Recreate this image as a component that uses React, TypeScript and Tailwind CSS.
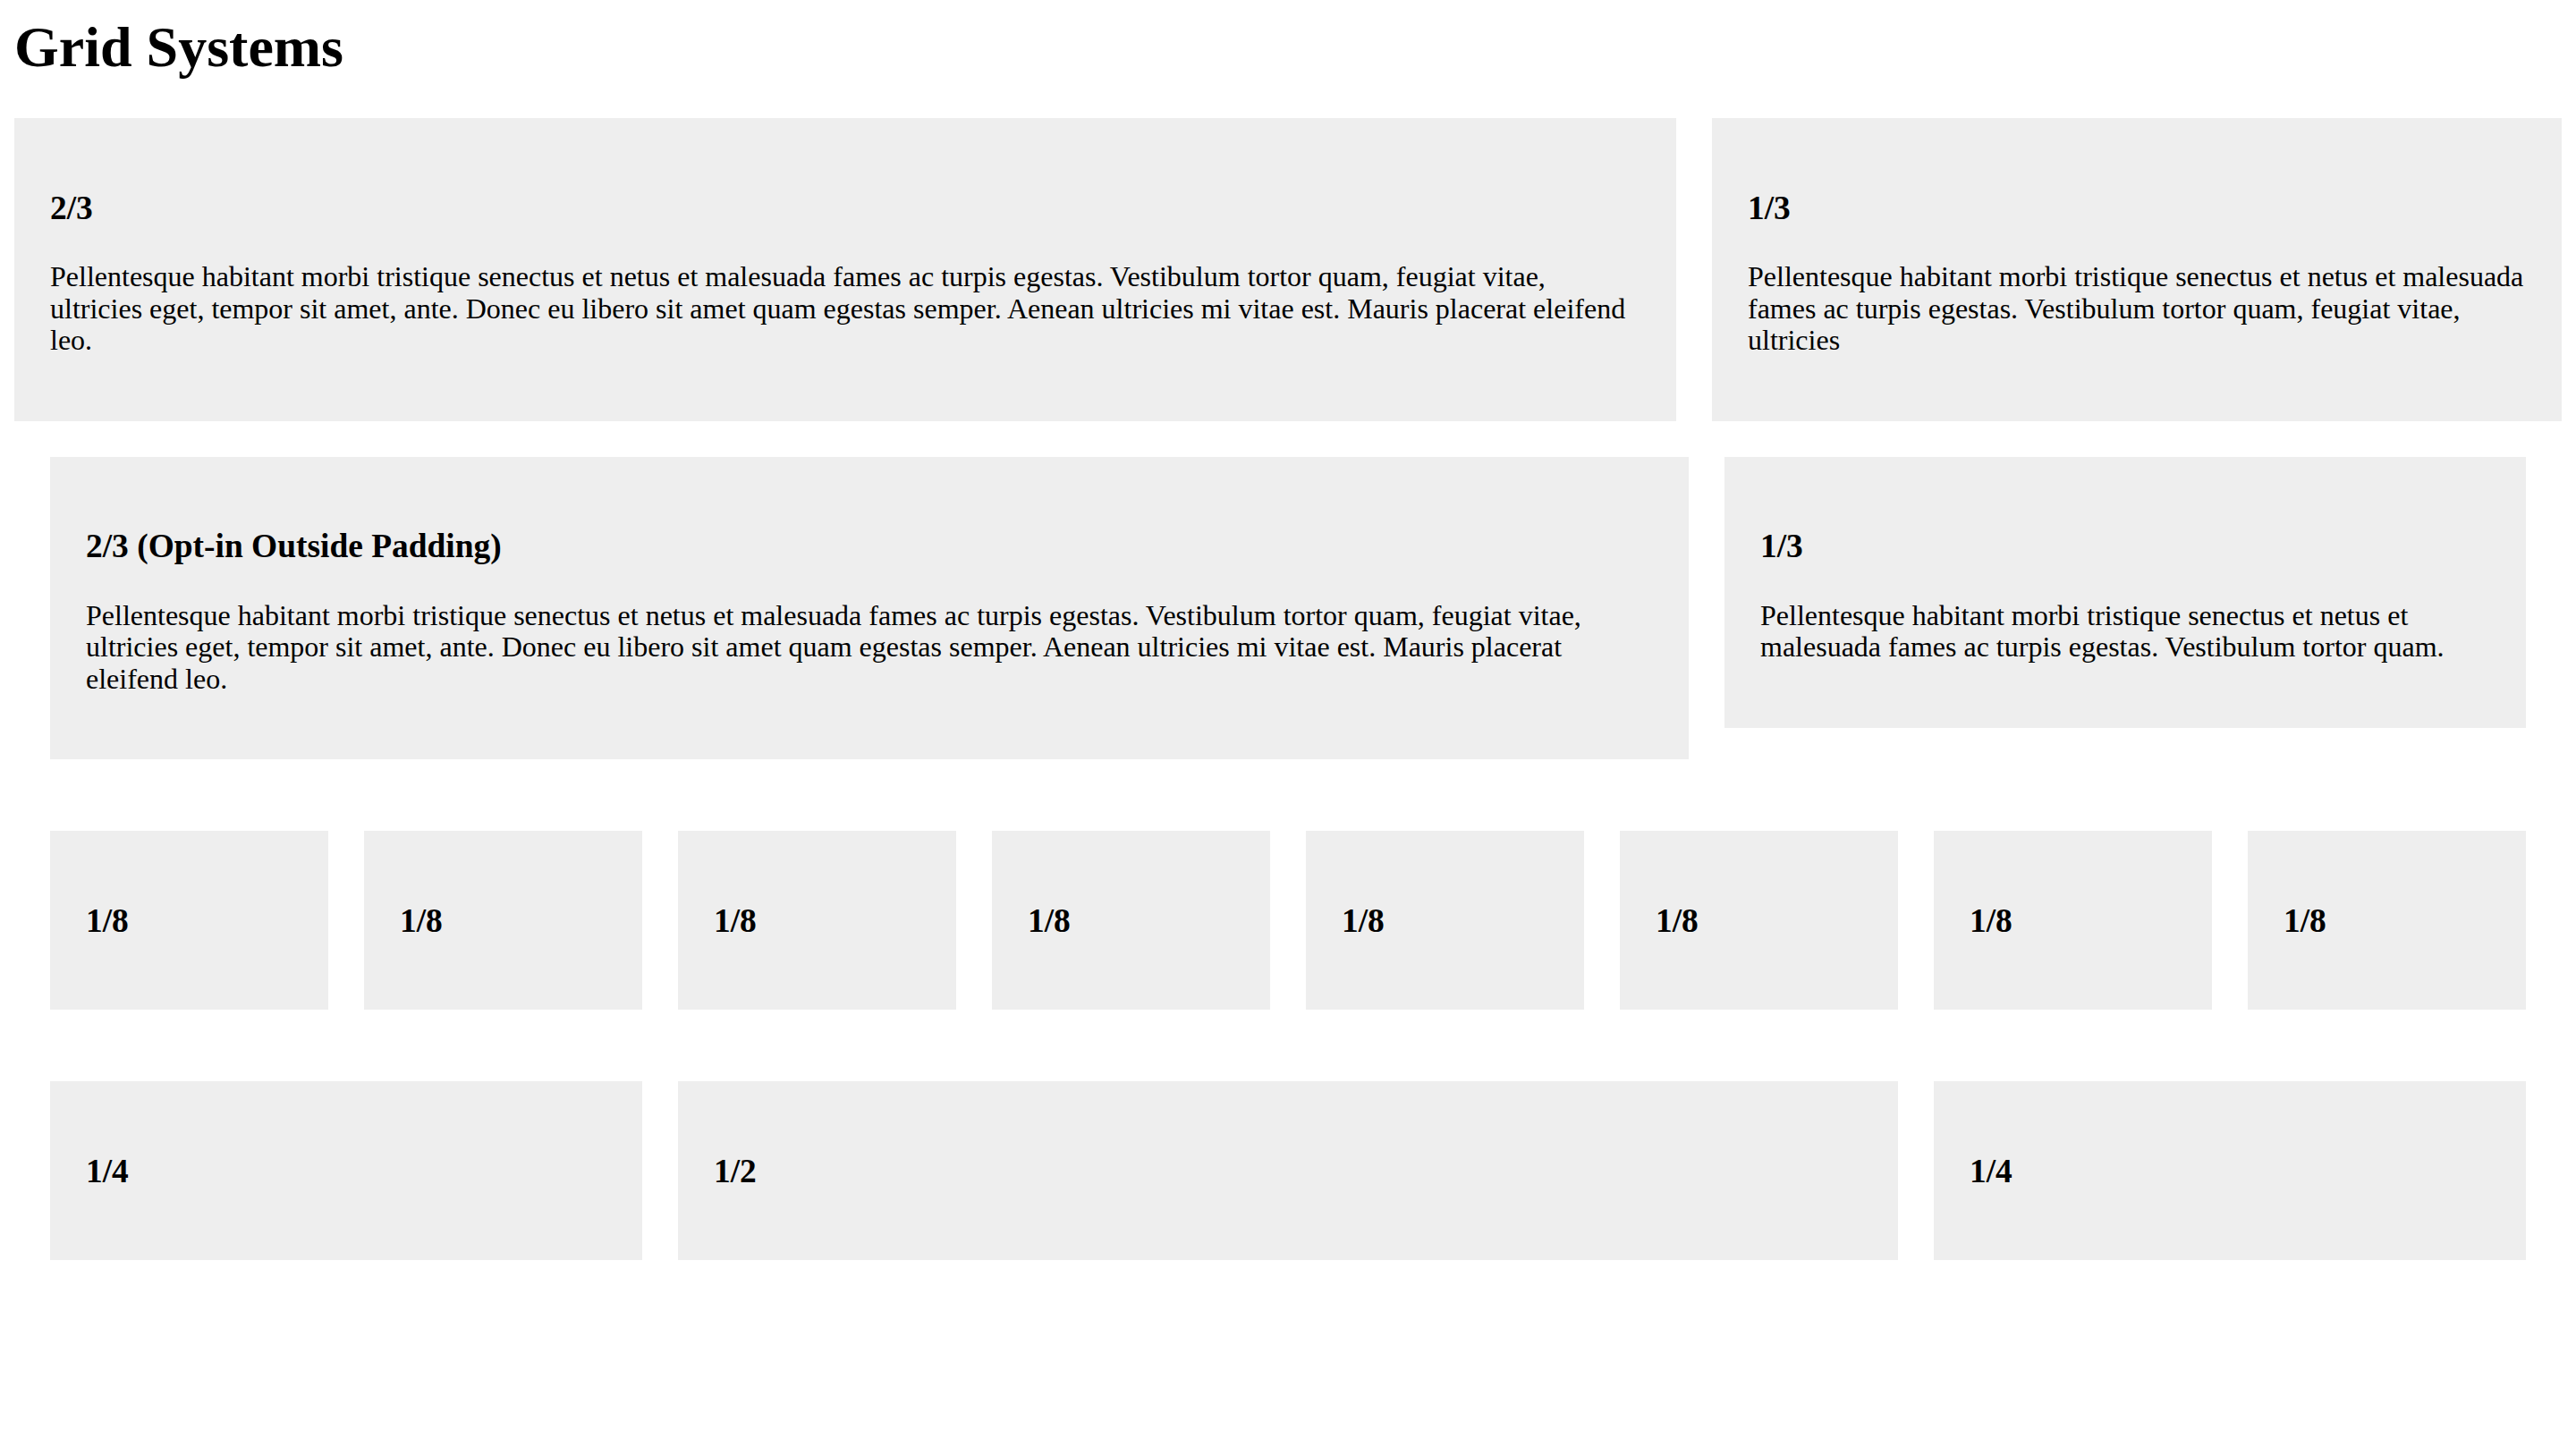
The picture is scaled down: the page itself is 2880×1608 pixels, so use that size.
import React from "react";

const LOREM_A =
  "Pellentesque habitant morbi tristique senectus et netus et malesuada fames ac turpis egestas. Vestibulum tortor quam, feugiat vitae, ultricies eget, tempor sit amet, ante. Donec eu libero sit amet quam egestas semper. Aenean ultricies mi vitae est. Mauris placerat eleifend leo.";
const LOREM_B =
  "Pellentesque habitant morbi tristique senectus et netus et malesuada fames ac turpis egestas. Vestibulum tortor quam, feugiat vitae, ultricies";
const LOREM_C =
  "Pellentesque habitant morbi tristique senectus et netus et malesuada fames ac turpis egestas. Vestibulum tortor quam.";

function Card({
  title,
  text,
  className = "",
}: {
  title: string;
  text?: string;
  className?: string;
}) {
  return (
    <div className={"bg-[#eeeeee] p-10 " + className}>
      <h3 className="text-[37.44px] font-bold leading-[45px] mt-[37.5px] mb-[37.5px]">
        {title}
      </h3>
      {text ? <p className="mt-8 mb-8">{text}</p> : null}
    </div>
  );
}

export default function App() {
  const eighths = Array.from({ length: 8 }, (_, i) => i);
  return (
    <div className="bg-white text-black p-4 font-['Liberation_Serif','Times_New_Roman',serif] text-[32px] leading-[35.5px] min-h-[1608px]">
      <h1 className="text-[64px] font-bold leading-[74px] mt-0 mb-[42px]">
        Grid Systems
      </h1>

      <div className="grid grid-cols-[1858fr_950fr] gap-10 items-start">
        <Card title="2/3" text={LOREM_A} />
        <Card title="1/3" text={LOREM_B} />
      </div>

      <div className="mt-10 px-10 grid grid-cols-3 gap-10 items-start">
        <Card className="col-span-2" title="2/3 (Opt-in Outside Padding)" text={LOREM_A} />
        <Card title="1/3" text={LOREM_C} />
      </div>

      <div className="mt-20 px-10 grid grid-cols-8 gap-10 items-start">
        {eighths.map((i) => (
          <Card key={i} title="1/8" />
        ))}
      </div>

      <div className="mt-20 px-10 grid grid-cols-8 gap-10 items-start">
        <Card className="col-span-2" title="1/4" />
        <Card className="col-span-4" title="1/2" />
        <Card className="col-span-2" title="1/4" />
      </div>
    </div>
  );
}
